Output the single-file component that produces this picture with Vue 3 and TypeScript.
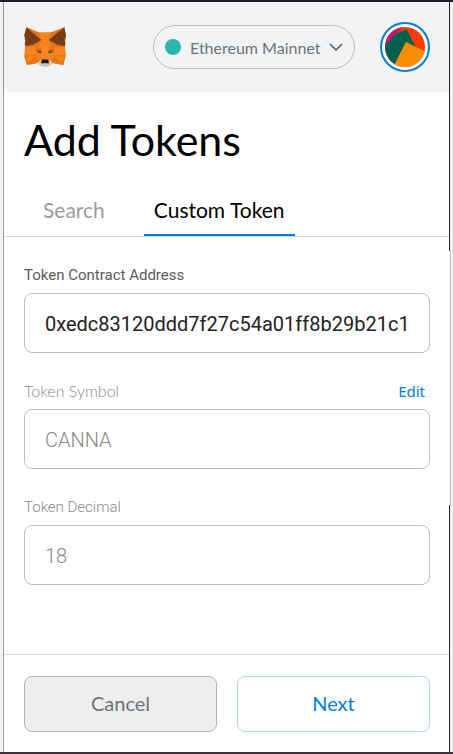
<script setup lang="ts">
import { ref } from 'vue'

const address = ref('0xedc83120ddd7f27c54a01ff8b29b21c1')
const symbol = ref('CANNA')
const decimals = ref('18')
const networks = ['Ethereum Mainnet']
const network = ref(networks[0])
const tabs = ['Search', 'Custom Token']
const activeTab = ref('Custom Token')
</script>

<template>
  <div class="window">
    <div class="edge-left"></div>
    <div class="panel">
      <header class="topbar">
        <svg class="fox" viewBox="75 82 123 117" aria-hidden="true">
          <polygon fill="#e2761b" points="82,83 120,98 153,98 193,83 198,108 194,138 197,165 190,193 160,187 147,197 127,197 114,187 84,193 76,168 80,140 76,106" />
          <polygon fill="#f6851b" points="120,98 153,98 148,120 156,146 165,162 157,181 147,176 126,176 116,181 107,162 117,146 125,120" />
          <polygon fill="#f6851b" points="78,139 107,141 116,152 107,164 76,166" />
          <polygon fill="#f6851b" points="195,139 166,141 157,152 166,164 197,166" />
          <polygon fill="#e4761b" points="76,167 108,164 114,187 84,193" />
          <polygon fill="#e4761b" points="197,167 165,164 159,187 190,193" />
          <polygon fill="#f6851b" points="80,169 107,167 87,187" />
          <polygon fill="#f6851b" points="193,169 166,167 186,187" />
          <polygon fill="#763d16" points="82,83 126,120 100,134 79,138 77,130 80,121 76,106" />
          <polygon fill="#763d16" points="193,83 147,120 173,134 194,138 197,130 193,121 198,106" />
          <polygon fill="#cd6116" points="107,149 123,145 128,159 114,157" />
          <polygon fill="#cd6116" points="166,149 150,145 145,159 159,157" />
          <polygon fill="#39434f" points="117,152 124,153 126,158 119,158" />
          <polygon fill="#39434f" points="156,152 149,153 147,158 154,158" />
          <polygon fill="#d7c1b3" points="114,186 125,178 148,178 159,186 147,198 127,198" />
          <polygon fill="#161616" points="127,177 146,177 148,188 125,188" />
        </svg>
        <label class="network">
          <span class="dot"></span>
          <select v-model="network" aria-label="Network">
            <option v-for="n in networks" :key="n">{{ n }}</option>
          </select>
          <svg class="chevron" viewBox="0 0 14 8" aria-hidden="true">
            <path d="M1 1l6 6 6-6" fill="none" stroke="#555b61" stroke-width="1.5" />
          </svg>
        </label>
        <button class="account" type="button" aria-label="Account">
          <svg viewBox="75 81 120 120" aria-hidden="true">
            <clipPath id="avatar"><circle cx="135" cy="141" r="60" /></clipPath>
            <g clip-path="url(#avatar)">
              <rect x="75" y="81" width="120" height="120" fill="#fc3a03" />
              <polygon fill="#c8147f" points="75,140 75,81 133,78 108,100 79,132" />
              <polygon fill="#03604f" points="70,140 79,131 108,100 140,88 167,140 138,126 100,200 70,205" />
              <polygon fill="#f68f03" points="138,126 200,156 200,210 95,210" />
            </g>
          </svg>
        </button>
      </header>

      <h1>Add Tokens</h1>
      <nav class="tabs">
        <button
          v-for="tab in tabs"
          :key="tab"
          type="button"
          :class="{ active: tab === activeTab }"
          @click="activeTab = tab"
        >{{ tab }}</button>
      </nav>

      <main class="form">
        <div class="field">
          <div class="caption"><label for="address">Token Contract Address</label></div>
          <input id="address" v-model="address" type="text" spellcheck="false" />
        </div>
        <div class="field muted">
          <div class="caption">
            <label for="symbol" class="humanist">Token Symbol</label>
            <a href="#edit">Edit</a>
          </div>
          <input id="symbol" v-model="symbol" type="text" disabled />
        </div>
        <div class="field muted">
          <div class="caption"><label for="decimals">Token Decimal</label></div>
          <input id="decimals" v-model="decimals" type="text" disabled />
        </div>
      </main>

      <footer class="actions">
        <button class="cancel" type="button">Cancel</button>
        <button class="next" type="button">Next</button>
      </footer>
    </div>
    <div class="edge-right"><span></span><i></i><span></span></div>
  </div>
</template>

<style>
body {
  background: #f3f2f1;
}
</style>

<style scoped>
* {
  box-sizing: border-box;
}
button,
select,
input {
  margin: 0;
  font: inherit;
}
.window {
  display: flex;
  min-height: 100vh;
  border-top: 2px solid #1d1c28;
  border-bottom: 2px solid #37323c;
  font-family: Lato, sans-serif;
}
.edge-left {
  width: 4px;
  border-right: 1px solid #98989a;
}
.panel {
  flex: 1;
  min-width: 0;
  display: flex;
  flex-direction: column;
  background: #fff;
}
.edge-right {
  display: grid;
  grid-template-rows: 249fr 254fr 247fr;
  width: 3px;
}
.edge-right span {
  margin-left: -1px;
  border-left: 1px solid #24242c;
}
.edge-right i {
  border-left: 1px solid #bcbcbc;
}
.topbar {
  display: flex;
  align-items: center;
  height: 90px;
  padding: 0 20px;
  background: #f2f3f5;
}
.fox {
  width: 42px;
  height: 40px;
  margin-right: auto;
}
.network {
  display: flex;
  align-items: center;
  width: 202px;
  height: 44px;
  padding: 0 11px;
  border: 1px solid #bbb;
  border-radius: 22px;
}
.dot {
  width: 16px;
  height: 16px;
  border-radius: 50%;
  background: #29b6af;
}
.network select {
  flex: 1;
  min-width: 0;
  padding: 0 0 0 9px;
  border: 0;
  appearance: none;
  background: none;
  color: #6a737d;
  font-size: 16px;
}
.chevron {
  width: 14px;
  height: 8px;
}
.account {
  width: 50px;
  height: 50px;
  margin-left: 25px;
  padding: 3px;
  border: 2px solid #037dd6;
  border-radius: 50%;
  background: #fff;
}
.account svg {
  display: block;
  width: 40px;
  height: 40px;
}
h1 {
  margin: 24px 20px 0;
  font-size: 43px;
  font-weight: 400;
  line-height: 48px;
  color: #000;
}
.tabs {
  display: flex;
  gap: 29px;
  margin-top: 24px;
  padding: 0 29px;
  border-bottom: 1px solid #d2d8dd;
}
.tabs button {
  height: 48px;
  padding: 0 10px 3px;
  border: 0;
  border-bottom: 2px solid transparent;
  background: none;
  color: #9b9b9b;
  font-size: 21px;
}
.tabs .active {
  border-color: #037dd6;
  color: #000;
}
.form {
  flex: 1;
  display: flex;
  flex-direction: column;
  gap: 28px;
  padding: 28px 20px;
  font-family: Roboto, sans-serif;
}
.caption {
  display: flex;
  justify-content: space-between;
  height: 28px;
  padding-right: 5px;
  color: #5b5b5b;
  font-size: 15px;
  line-height: 20px;
}
.field input {
  display: block;
  width: 100%;
  height: 60px;
  padding: 1px 20px 0;
  border: 1px solid #bbc0c5;
  border-radius: 8px;
  background: #fff;
  color: #222;
  font-size: 20px;
}
.muted .caption,
.muted input {
  color: #888;
  font-weight: 300;
}
.caption .humanist {
  font-family: Lato, sans-serif;
  font-size: 16px;
}
.caption a {
  color: #037dd6;
  font-family: "Noto Sans", sans-serif;
  font-weight: 400;
  text-decoration: none;
}
.actions {
  display: flex;
  gap: 20px;
  padding: 21px 20px 20px;
  border-top: 1px solid #d2d8dd;
}
.actions button {
  flex: 1;
  height: 56px;
  padding: 0 0 3px;
  border: 1px solid #b4b4b4;
  border-radius: 8px;
  background: #eee;
  color: #6a737d;
  font-size: 20px;
}
.actions .next {
  border-color: #b0d7f2;
  background: #fff;
  color: #037dd6;
}
</style>
